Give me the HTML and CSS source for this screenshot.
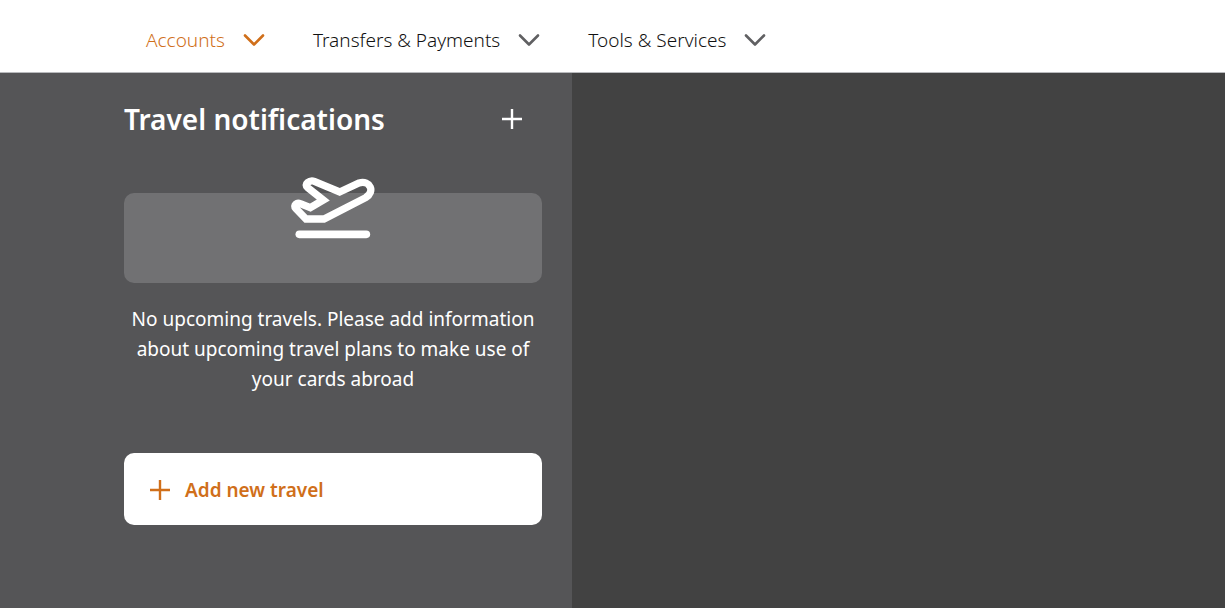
FILE: index.html
```html
<!DOCTYPE html>
<html lang="en">
<head>
<meta charset="utf-8">
<meta name="viewport" content="width=device-width, initial-scale=1">
<title>Travel notifications</title>
<link rel="stylesheet" href="styles.css">
</head>
<body>
<header class="topbar">
  <nav class="nav" aria-label="Main">
    <a class="nav-link nav-link-active" href="#accounts">Accounts
      <svg class="chevron" viewBox="0 0 22 14" aria-hidden="true"><path d="M2 2.5 11 11.5 20 2.5"/></svg></a>
    <a class="nav-link" href="#transfers">Transfers &amp; Payments
      <svg class="chevron" viewBox="0 0 22 14" aria-hidden="true"><path d="M2 2.5 11 11.5 20 2.5"/></svg></a>
    <a class="nav-link" href="#tools">Tools &amp; Services
      <svg class="chevron" viewBox="0 0 22 14" aria-hidden="true"><path d="M2 2.5 11 11.5 20 2.5"/></svg></a>
  </nav>
</header>
<main class="content">
  <section class="panel">
    <div class="panel-head">
      <h1 class="title">Travel notifications</h1>
      <button class="icon-button" type="button" aria-label="Add travel">
        <svg class="plus" viewBox="0 0 20 20" aria-hidden="true"><path d="M10 0V20M0 10H20"/></svg>
      </button>
    </div>
    <div class="illustration">
      <svg class="plane" viewBox="34 36 252 186" aria-hidden="true">
        <path class="plane-body" d="M180 81 238 54C272 45 287 80 258 98L133 162H79L48 130C40 120 52 111 62 116L92 128 131 105 84 68C71 58 90 44 104 49Z"/>
        <path class="plane-ground" d="M59 208H260"/>
      </svg>
    </div>
    <p class="message">No upcoming travels. Please add information about upcoming travel plans to make use of your cards abroad</p>
    <button class="add-button" type="button">
      <svg class="plus" viewBox="0 0 20 20" aria-hidden="true"><path d="M10 0V20M0 10H20"/></svg>
      Add new travel
    </button>
  </section>
  <div class="detail"></div>
</main>
</body>
</html>
```
FILE: styles.css
```css
* { box-sizing: border-box; }
body {
  margin: 0;
  min-height: 100vh;
  display: flex;
  flex-direction: column;
  font-family: "Segoe UI", "Noto Sans", "Open Sans", sans-serif;
  background: #424242;
}
.topbar {
  padding: 24px 146px 16px;
  background: #fff;
  border-bottom: 1px solid #b9babd;
}
.nav { display: flex; gap: 48px; }
.nav-link {
  display: flex;
  align-items: center;
  gap: 18px;
  font-size: 19px;
  font-weight: 300;
  line-height: 32px;
  color: #111;
  text-decoration: none;
  white-space: nowrap;
}
.nav-link-active { color: #d06f1a; }
.chevron {
  width: 22px;
  height: 14px;
  fill: none;
  stroke: #606062;
  stroke-width: 2.6;
  stroke-linecap: round;
  stroke-linejoin: round;
}
.nav-link-active .chevron { stroke: #d06f1a; }
.content { flex: 1; display: flex; }
.panel {
  width: 572px;
  padding: 24px 30px 24px 124px;
  background: #555557;
  color: #fff;
}
.panel-head {
  display: flex;
  align-items: center;
  justify-content: space-between;
  padding-right: 20px;
}
.title {
  margin: 0;
  font-size: 28px;
  font-weight: 600;
  line-height: 44px;
}
.icon-button {
  display: flex;
  padding: 0;
  border: 0;
  background: none;
  color: #fff;
}
.plus {
  width: 20px;
  height: 20px;
  fill: none;
  stroke: currentColor;
  stroke-width: 2.4;
}
.illustration {
  height: 90px;
  margin-top: 52px;
  display: flex;
  justify-content: center;
  border-radius: 10px;
  background: #717173;
}
.plane {
  width: 84px;
  height: 62px;
  margin-top: -16px;
  fill: none;
  stroke: #fff;
}
.plane-body { stroke-width: 22; stroke-linejoin: miter; }
.plane-ground { stroke-width: 23; stroke-linecap: round; }
.message {
  margin: 21px 0 0;
  font-size: 19px;
  line-height: 30px;
  text-align: center;
}
.add-button {
  display: flex;
  align-items: center;
  gap: 15px;
  width: 100%;
  height: 72px;
  margin-top: 59px;
  padding: 2px 26px 0;
  border: 0;
  border-radius: 10px;
  background: #fff;
  color: #d06f1a;
  font-family: inherit;
  font-size: 19px;
  font-weight: 600;
}
.detail { flex: 1; background: #424242; }
```
